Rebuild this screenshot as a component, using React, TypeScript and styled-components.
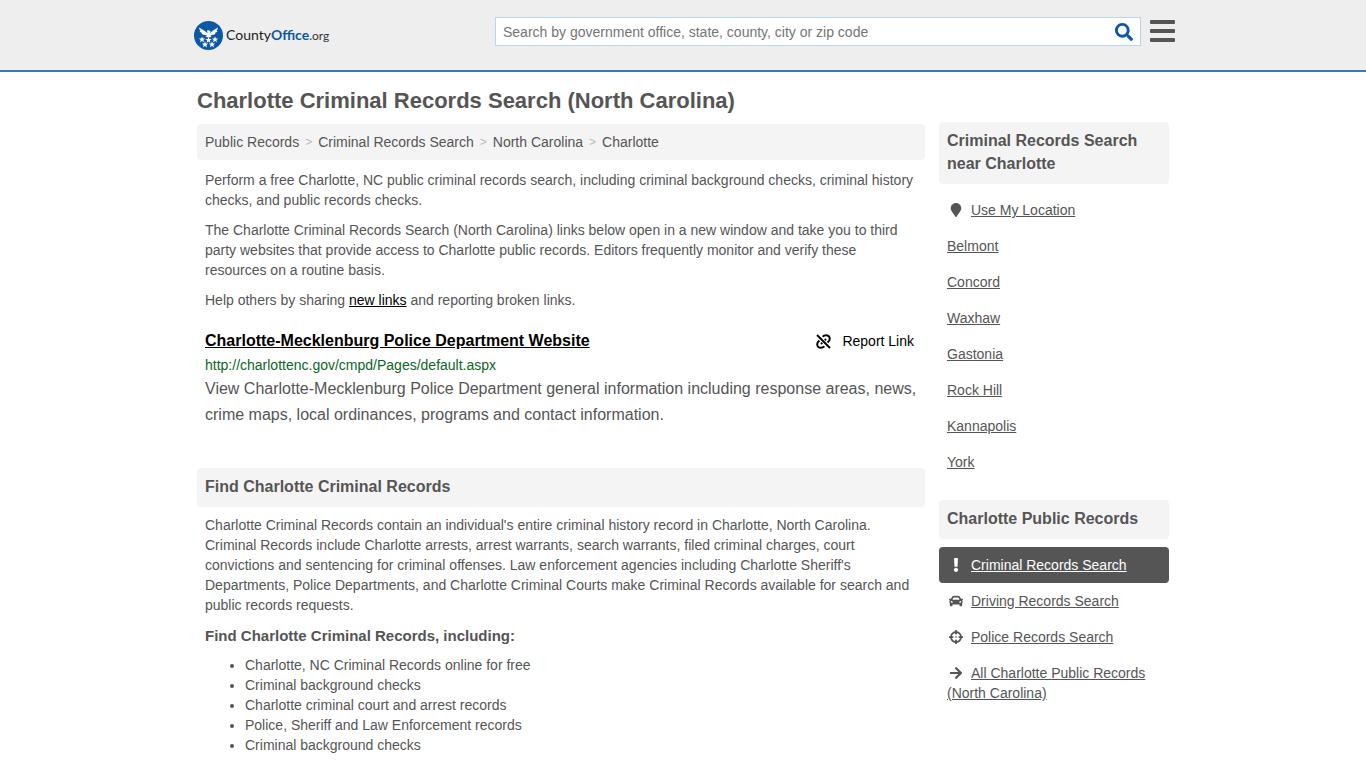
import React from "react";
import styled, { createGlobalStyle } from "styled-components";
import {
  FaArrowRight,
  FaCar,
  FaCrosshairs,
  FaExclamation,
  FaMapMarker,
  FaSearch,
} from "react-icons/fa";

const GlobalStyle = createGlobalStyle`
  *, *::before, *::after { box-sizing: border-box; }
  body {
    margin: 0;
    background: #fff;
    color: #555;
    font: 14px/20px "Liberation Sans", Arial, sans-serif;
  }
  h1, h2, h3, p, ul { margin: 0; padding: 0; }
  a { color: inherit; }
`;

const Header = styled.header`
  background: #eee;
  border-bottom: 2px solid #337ab7;
`;

const HeaderInner = styled.div`
  display: flex;
  align-items: flex-start;
  max-width: 984px;
  height: 70px;
  margin: 0 auto;
  padding: 17px 0 0 3px;
`;

const Logo = styled.a`
  display: flex;
  align-items: center;
  gap: 3px;
  width: 301px;
  height: 36px;
  color: #222;
  font: 14px/20px Lato, "Liberation Sans", sans-serif;
  text-decoration: none;

  b { color: #0d57a7; }
  small { color: #333; font-size: 12px; }
`;

const SearchForm = styled.form`
  display: flex;
  flex: 1;
  height: 29px;
  border: 1px solid #b5d8f0;
  background: #fff;
`;

const SearchInput = styled.input`
  flex: 1;
  min-width: 0;
  padding: 0 7px;
  border: 0;
  background: transparent;
  color: #555;
  font: 14px/20px "Liberation Sans", Arial, sans-serif;

  &::placeholder { color: #757575; opacity: 1; }
`;

const SearchButton = styled.button`
  display: flex;
  align-items: center;
  padding: 0 7px;
  border: 0;
  background: transparent;
  color: #0d57a7;
  font-size: 18px;
`;

const MenuButton = styled.button`
  display: flex;
  flex-direction: column;
  gap: 5px;
  width: 25px;
  margin: 3px 0 0 9px;
  padding: 0;
  border: 0;
  background: transparent;
`;

const MenuBar = styled.span`
  height: 4px;
  border-radius: 1px;
  background: #555;
`;

const Page = styled.div`
  max-width: 972px;
  margin: 0 auto;
  padding-top: 14px;
`;

const Title = styled.h1`
  font-size: 22px;
  line-height: 30px;
`;

const Columns = styled.div`
  display: flex;
  align-items: flex-start;
  gap: 14px;
  margin-top: 6px;
`;

const Main = styled.main`
  flex: 1;
  min-width: 0;
  padding-top: 2px;
`;

const Breadcrumb = styled.nav`
  display: flex;
  gap: 6px;
  padding: 8px;
  border-radius: 4px;
  background: #f4f4f4;

  a { text-decoration: none; }
  span { color: #bbb; font-size: 12px; }
`;

const Text = styled.div`
  display: grid;
  gap: 10px;
  padding: 10px 8px 0;
`;

const DarkLink = styled.a`
  color: #000;
`;

const Listing = styled.article`
  padding: 20px 8px 40px;
`;

const ListingHead = styled.div`
  display: flex;
  justify-content: space-between;
  align-items: center;
  padding-right: 3px;
`;

const ListingTitle = styled.h2`
  color: #000;
  font-size: 16px;
  line-height: 22px;
`;

const ReportButton = styled.button`
  display: flex;
  align-items: center;
  gap: 11px;
  padding: 0;
  border: 0;
  background: transparent;
  color: #000;
  font: 14px/20px "Liberation Sans", Arial, sans-serif;
`;

const Url = styled.p`
  && { padding: 3px 0 1px; }
  color: #0b6623;
`;

const Description = styled.p`
  font-size: 16px;
  line-height: 26px;
`;

const BoxHeading = styled.h2`
  && { padding: 7px 8px 9px; }
  border-radius: 4px;
  background: #f4f4f4;
  font-size: 16px;
  line-height: 23px;
`;

const Section = styled.section`
  padding: 8px 8px 0;
`;

const SubHeading = styled.h3`
  && { padding: 10px 0 8px; }
  font-size: 15px;
  line-height: 22px;
`;

const Bullets = styled.ul`
  && { padding-left: 40px; }
`;

const Sidebar = styled.aside`
  width: 230px;
`;

const SideList = styled.ul`
  && { padding: 8px 0 20px; }
  list-style: none;
`;

const SideItem = styled.li<{ $active?: boolean }>`
  padding: 8px;
  border-radius: 4px;
  background: ${(p) => (p.$active ? "#555" : "transparent")};
  color: ${(p) => (p.$active ? "#fff" : "inherit")};
`;

const SideIcon = styled.span`
  display: inline-flex;
  justify-content: center;
  width: 18px;
  margin-right: 6px;
  font-size: 14px;
  vertical-align: -2px;
`;

const Eagle = () => (
  <svg width="29" height="29" viewBox="0 0 58 58" aria-hidden="true">
    <circle cx="29" cy="29" r="29" fill="#0d57a7" />
    <path
      fill="#fff"
      d="M10 13 L20 19 Q25 22 27 25 L26 19 Q30 17 33 21 L31 25 Q34 22 38 19 L48 13 Q48 17 45 19 L47 20 Q45 23 42 24 L43 25 Q40 28 36 28 L33 29 L35 32 L29 33 L23 32 L26 29 L22 28 Q18 28 15 25 L16 24 Q13 23 11 20 L13 19 Q10 17 10 13Z"
    />
    {[
      [16, 37],
      [29, 38],
      [42, 37],
      [22, 47],
      [36, 47],
    ].map(([x, y]) => (
      <path
        key={`${x}-${y}`}
        transform={`translate(${x} ${y}) scale(1.25)`}
        fill="#fff"
        d="M0 -5 L1.4 -1.6 L5 -1.5 L2.2 0.8 L3.1 4.4 L0 2.4 L-3.1 4.4 L-2.2 0.8 L-5 -1.5 L-1.4 -1.6Z"
      />
    ))}
  </svg>
);

const BrokenLink = () => (
  <svg
    width="15"
    height="15"
    viewBox="0 0 15 15"
    fill="none"
    stroke="#000"
    strokeWidth="2"
    aria-hidden="true"
  >
    <path d="M1 1 L14 14" />
    <path d="M6.6 2.6 Q8 1.2 10.2 1.2 A3.6 3.6 0 0 1 13.8 4.8 Q13.8 6.8 11.6 8.6" />
    <path d="M8.4 12.4 Q7 13.8 4.8 13.8 A3.6 3.6 0 0 1 1.2 10.2 Q1.2 8.2 3.4 6.4" />
    <path d="M5 10 L6.2 8.8 M8.8 6.2 L10 5" />
  </svg>
);

const crumbs = ["Public Records", "Criminal Records Search", "North Carolina", "Charlotte"];
const cities = ["Belmont", "Concord", "Waxhaw", "Gastonia", "Rock Hill", "Kannapolis", "York"];
const bullets = [
  "Charlotte, NC Criminal Records online for free",
  "Criminal background checks",
  "Charlotte criminal court and arrest records",
  "Police, Sheriff and Law Enforcement records",
  "Criminal background checks",
];
const records = [
  { label: "Criminal Records Search", Icon: FaExclamation, active: true },
  { label: "Driving Records Search", Icon: FaCar },
  { label: "Police Records Search", Icon: FaCrosshairs },
  { label: "All Charlotte Public Records (North Carolina)", Icon: FaArrowRight },
];

export default function App() {
  return (
    <>
      <GlobalStyle />
      <Header>
        <HeaderInner>
          <Logo href="#" aria-label="CountyOffice.org">
            <Eagle />
            <span>
              County<b>Office</b>
              <small>.org</small>
            </span>
          </Logo>
          <SearchForm role="search">
            <SearchInput
              type="search"
              aria-label="Search"
              placeholder="Search by government office, state, county, city or zip code"
            />
            <SearchButton type="button" aria-label="Submit search">
              <FaSearch />
            </SearchButton>
          </SearchForm>
          <MenuButton type="button" aria-label="Menu">
            <MenuBar />
            <MenuBar />
            <MenuBar />
          </MenuButton>
        </HeaderInner>
      </Header>
      <Page>
        <Title>Charlotte Criminal Records Search (North Carolina)</Title>
        <Columns>
          <Main>
            <Breadcrumb aria-label="Breadcrumb">
              {crumbs.map((c, i) => (
                <React.Fragment key={c}>
                  {i > 0 && <span>&gt;</span>}
                  <a href="#">{c}</a>
                </React.Fragment>
              ))}
            </Breadcrumb>
            <Text>
              <p>
                Perform a free Charlotte, NC public criminal records search, including criminal
                background checks, criminal history checks, and public records checks.
              </p>
              <p>
                The Charlotte Criminal Records Search (North Carolina) links below open in a new
                window and take you to third party websites that provide access to Charlotte public
                records. Editors frequently monitor and verify these resources on a routine basis.
              </p>
              <p>
                Help others by sharing <DarkLink href="#">new links</DarkLink> and reporting broken
                links.
              </p>
            </Text>
            <Listing>
              <ListingHead>
                <ListingTitle>
                  <a href="#">Charlotte-Mecklenburg Police Department Website</a>
                </ListingTitle>
                <ReportButton type="button">
                  <BrokenLink />
                  Report Link
                </ReportButton>
              </ListingHead>
              <Url>http://charlottenc.gov/cmpd/Pages/default.aspx</Url>
              <Description>
                View Charlotte-Mecklenburg Police Department general information including response
                areas, news, crime maps, local ordinances, programs and contact information.
              </Description>
            </Listing>
            <BoxHeading>Find Charlotte Criminal Records</BoxHeading>
            <Section>
              <p>
                Charlotte Criminal Records contain an individual's entire criminal history record in
                Charlotte, North Carolina. Criminal Records include Charlotte arrests, arrest
                warrants, search warrants, filed criminal charges, court convictions and sentencing
                for criminal offenses. Law enforcement agencies including Charlotte Sheriff's
                Departments, Police Departments, and Charlotte Criminal Courts make Criminal Records
                available for search and public records requests.
              </p>
              <SubHeading>Find Charlotte Criminal Records, including:</SubHeading>
              <Bullets>
                {bullets.map((b, i) => (
                  <li key={i}>{b}</li>
                ))}
              </Bullets>
            </Section>
          </Main>
          <Sidebar>
            <BoxHeading>Criminal Records Search near Charlotte</BoxHeading>
            <SideList>
              <SideItem>
                <SideIcon>
                  <FaMapMarker />
                </SideIcon>
                <a href="#">Use My Location</a>
              </SideItem>
              {cities.map((c) => (
                <SideItem key={c}>
                  <a href="#">{c}</a>
                </SideItem>
              ))}
            </SideList>
            <BoxHeading>Charlotte Public Records</BoxHeading>
            <SideList>
              {records.map(({ label, Icon, active }) => (
                <SideItem key={label} $active={active}>
                  <SideIcon>
                    <Icon />
                  </SideIcon>
                  <a href="#">{label}</a>
                </SideItem>
              ))}
            </SideList>
          </Sidebar>
        </Columns>
      </Page>
    </>
  );
}
